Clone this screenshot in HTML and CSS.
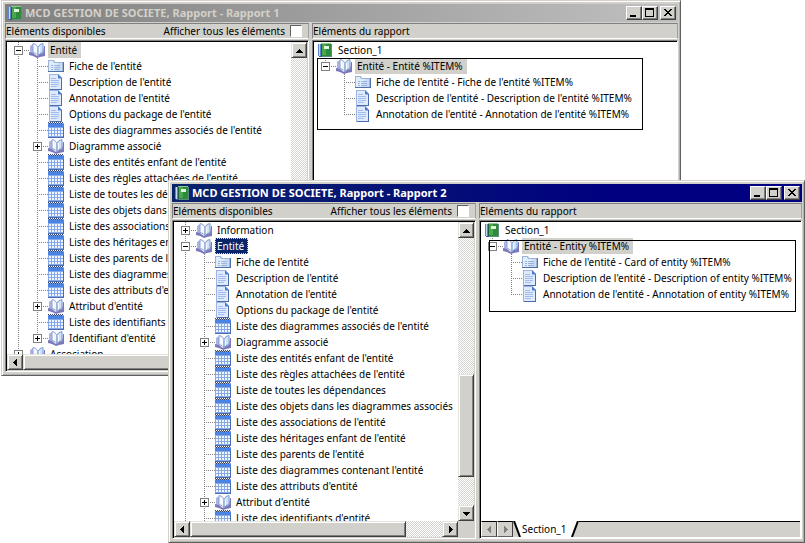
FILE: index.html
```html
<!DOCTYPE html>
<html lang="fr">
<head>
<meta charset="UTF-8">
<meta name="viewport" content="width=device-width, initial-scale=1.0">
<title>MCD GESTION DE SOCIETE</title>
<link rel="stylesheet" href="styles.css">
</head>
<body>
    <!-- Shared icons -->
    <svg class="sprite" aria-hidden="true">
        <symbol id="report" viewBox="0 0 16 16">
            <path d="M1 2h3v12H1z" fill="#5f86cc"/>
            <path d="M2 2h1v12H2z" fill="#c4daf4"/>
            <path d="M4 1h10v13H4z" fill="#2c8a3a"/>
            <path d="M4 1h10v1H4z" fill="#8cc890"/>
            <path d="M4 2h1v12H4z" fill="#1d5c3c"/>
            <path d="M5 2h4v11H5z" fill="#4aa84c"/>
            <path d="M7 4h5v3H7z" fill="#e4f4dc"/>
            <path d="M14 2h1v13h-1zM4 14h11v1H4z" fill="#5e8c80"/>
            <path d="M2 14h3v1H2z" fill="#3c5c98"/>
        </symbol>
        <symbol id="books" viewBox="0 0 16 16">
            <path d="M1 4l3-2v10l-3-1z" fill="#a9b4e4"/>
            <path d="M0 10l4 1 4 3 2-2 4-1 1-7h1v10l-5 1-3 1-4-2-4-1z" fill="#7c78bc"/>
            <path d="M4 1.500l3 1 2 3v8l-2-2-3-1z" fill="#f6f9ff" stroke="#8fa2cf" stroke-width="1"/>
            <path d="M9 5.500l2-3 3-1v9l-3 1-2 2z" fill="#cfe2f8" stroke="#7f9bcf" stroke-width="1"/>
            <path d="M10 6l1-2v7l-1 1z" fill="#f4f9ff"/>
        </symbol>
        <symbol id="folder" viewBox="0 0 16 16">
            <path d="M0 2h6l1 2h8v10H0z" fill="#9db4d8"/>
            <path d="M1 3h4l1 2h8v8H1z" fill="#e0edfb"/>
            <path d="M10 5h4v8H6z" fill="#c8dcf5"/>
            <path d="M0 13h16v1H0zM15 4h1v10h-1z" fill="#4f6fa8"/>
            <path d="M3 7h2v1H3zM6 7h6v1H6zM3 9h2v1H3zM6 9h6v1H6zM3 11h2v1H3zM6 11h6v1H6z" fill="#9db4de"/>
        </symbol>
        <symbol id="doc" viewBox="0 0 16 16">
            <path d="M1 0h9l4 4v12H1z" fill="#9db4e4"/>
            <path d="M2 1h8v4h3v10H2z" fill="#dfeafd"/>
            <path d="M10 0l4 4h-4z" fill="#4c7ed0"/>
            <path d="M13 4h1v12H2v-1h11z" fill="#4a6cae"/>
            <path d="M3 4h5v1H3zM3 6h8v1H3zM3 8h8v1H3zM3 10h8v1H3zM3 12h6v1H3z" fill="#a3bcf0"/>
        </symbol>
        <symbol id="list" viewBox="0 0 16 16">
            <path d="M0 1h16v15H0z" fill="#86a8e6"/>
            <path d="M0 2h16v3H0z" fill="#4a82e6"/>
            <path d="M0 0h1v1H0zM2 0h1v1H2zM4 0h1v1H4zM6 0h1v1H6zM8 0h1v1H8zM10 0h1v1h-1zM12 0h1v1h-1zM14 0h1v1h-1zM1 1h1v1H1zM3 1h1v1H3zM5 1h1v1H5zM7 1h1v1H7zM9 1h1v1H9zM11 1h1v1h-1zM13 1h1v1h-1z" fill="#3a4664"/>
            <path d="M1 6h2v2H1zM4 6h2v2H4zM7 6h2v2H7zM10 6h2v2h-2zM13 6h2v2h-2zM1 9h2v2H1zM4 9h2v2H4zM7 9h2v2H7zM10 9h2v2h-2zM13 9h2v2h-2zM1 12h2v2H1zM4 12h2v2H4zM7 12h2v2H7zM10 12h2v2h-2zM13 12h2v2h-2z" fill="#f2f7ff"/>
            <path d="M0 15h16v1H0zM15 5h1v11h-1z" fill="#4a6cae"/>
        </symbol>
        <symbol id="up" viewBox="0 0 7 7"><path d="M3 2h1v1h1v1h1v1h1v1H0V5h1V4h1V3h1z"/></symbol>
        <symbol id="down" viewBox="0 0 7 7"><path d="M0 2h7v1H6v1H5v1H4v1H3V5H2V4H1V3H0z"/></symbol>
        <symbol id="left" viewBox="0 0 7 7"><path d="M5 0v7H4V6H3V5H2V4H1V3h1V2h1V1h1V0z"/></symbol>
        <symbol id="right" viewBox="0 0 7 7"><path d="M2 0v7h1V6h1V5h1V4h1V3H5V2H4V1H3V0z"/></symbol>
        <symbol id="minimize" viewBox="0 0 10 10"><path d="M1 7h6v2H1z"/></symbol>
        <symbol id="maximize" viewBox="0 0 10 10"><path d="M0 0h9v9H0zM1 2v6h7V2z" fill-rule="evenodd"/></symbol>
        <symbol id="close" viewBox="0 0 10 10"><path d="M1 1h2v1h1v1h2V2h1V1h2v1H8v1H7v1H6v1h1v1h1v1h1v1H7V7H6V6H4v1H3v1H1V7h1V6h1V5h1V4H3V3H2V2H1z"/></symbol>
    </svg>

    <main class="desktop">
        <!-- Rapport 1 -->
        <section class="window window-back">
            <header class="titlebar">
                <svg class="icon"><use href="#report"/></svg>
                <h1>MCD GESTION DE SOCIETE, Rapport - Rapport 1</h1>
                <button class="caption" aria-label="Réduire"><svg><use href="#minimize"/></svg></button>
                <button class="caption" aria-label="Agrandir"><svg><use href="#maximize"/></svg></button>
                <button class="caption caption-close" aria-label="Fermer"><svg><use href="#close"/></svg></button>
            </header>
            <div class="panes">
                <div class="pane-head">
                    <h2>Eléments disponibles</h2>
                    <label for="all1">Afficher tous les éléments</label>
                    <input type="checkbox" id="all1">
                </div>
                <div class="pane-head">
                    <h2>Eléments du rapport</h2>
                </div>
                <div class="pane pane-scroll">
                    <ul class="tree">
                        <li>
                            <div class="row"><button class="toggle" aria-label="Replier"></button><svg class="icon"><use href="#books"/></svg><span class="label marked">Entité</span></div>
                            <ul>
                                <li><div class="row leaf"><svg class="icon"><use href="#folder"/></svg><span class="label">Fiche de l'entité</span></div></li>
                                <li><div class="row leaf"><svg class="icon"><use href="#doc"/></svg><span class="label">Description de l'entité</span></div></li>
                                <li><div class="row leaf"><svg class="icon"><use href="#doc"/></svg><span class="label">Annotation de l'entité</span></div></li>
                                <li><div class="row leaf"><svg class="icon"><use href="#doc"/></svg><span class="label">Options du package de l'entité</span></div></li>
                                <li><div class="row leaf"><svg class="icon"><use href="#list"/></svg><span class="label">Liste des diagrammes associés de l'entité</span></div></li>
                                <li><div class="row"><button class="toggle plus" aria-label="Développer"></button><svg class="icon"><use href="#books"/></svg><span class="label">Diagramme associé</span></div></li>
                                <li><div class="row leaf"><svg class="icon"><use href="#list"/></svg><span class="label">Liste des entités enfant de l'entité</span></div></li>
                                <li><div class="row leaf"><svg class="icon"><use href="#list"/></svg><span class="label">Liste des règles attachées de l'entité</span></div></li>
                                <li><div class="row leaf"><svg class="icon"><use href="#list"/></svg><span class="label">Liste de toutes les dépendances</span></div></li>
                                <li><div class="row leaf"><svg class="icon"><use href="#list"/></svg><span class="label">Liste des objets dans les diagrammes associés</span></div></li>
                                <li><div class="row leaf"><svg class="icon"><use href="#list"/></svg><span class="label">Liste des associations de l'entité</span></div></li>
                                <li><div class="row leaf"><svg class="icon"><use href="#list"/></svg><span class="label">Liste des héritages enfant de l'entité</span></div></li>
                                <li><div class="row leaf"><svg class="icon"><use href="#list"/></svg><span class="label">Liste des parents de l'entité</span></div></li>
                                <li><div class="row leaf"><svg class="icon"><use href="#list"/></svg><span class="label">Liste des diagrammes contenant l'entité</span></div></li>
                                <li><div class="row leaf"><svg class="icon"><use href="#list"/></svg><span class="label">Liste des attributs d'entité</span></div></li>
                                <li><div class="row"><button class="toggle plus" aria-label="Développer"></button><svg class="icon"><use href="#books"/></svg><span class="label">Attribut d'entité</span></div></li>
                                <li><div class="row leaf"><svg class="icon"><use href="#list"/></svg><span class="label">Liste des identifiants d'entité</span></div></li>
                                <li><div class="row"><button class="toggle plus" aria-label="Développer"></button><svg class="icon"><use href="#books"/></svg><span class="label">Identifiant d'entité</span></div></li>
                            </ul>
                        </li>
                        <li class="more"><div class="row"><button class="toggle plus" aria-label="Développer"></button><svg class="icon"><use href="#books"/></svg><span class="label">Association</span></div></li>
                    </ul>
                    <div class="scroll scroll-v">
                        <button aria-label="Haut"><svg><use href="#up"/></svg></button>
                        <span class="track"></span>
                        <button aria-label="Bas"><svg><use href="#down"/></svg></button>
                    </div>
                    <div class="scroll scroll-h">
                        <button aria-label="Gauche"><svg><use href="#left"/></svg></button>
                        <span class="thumb"></span>
                        <span class="track"></span>
                        <button aria-label="Droite"><svg><use href="#right"/></svg></button>
                    </div>
                </div>
                <div class="pane">
                    <div class="tree">
                        <div class="row section"><svg class="icon"><use href="#report"/></svg><span class="label">Section_1</span></div>
                        <ul>
                            <li>
                                <div class="row"><button class="toggle" aria-label="Replier"></button><svg class="icon"><use href="#books"/></svg><span class="label marked">Entité - Entité %ITEM%</span></div>
                                <ul>
                                    <li><div class="row leaf"><svg class="icon"><use href="#folder"/></svg><span class="label">Fiche de l'entité - Fiche de l'entité %ITEM%</span></div></li>
                                    <li><div class="row leaf"><svg class="icon"><use href="#doc"/></svg><span class="label">Description de l'entité - Description de l'entité %ITEM%</span></div></li>
                                    <li><div class="row leaf"><svg class="icon"><use href="#doc"/></svg><span class="label">Annotation de l'entité - Annotation de l'entité %ITEM%</span></div></li>
                                </ul>
                            </li>
                        </ul>
                        <div class="outline outline-back"></div>
                    </div>
                </div>
            </div>
        </section>

        <!-- Rapport 2 -->
        <section class="window window-front">
            <header class="titlebar active">
                <svg class="icon"><use href="#report"/></svg>
                <h1>MCD GESTION DE SOCIETE, Rapport - Rapport 2</h1>
                <button class="caption" aria-label="Réduire"><svg><use href="#minimize"/></svg></button>
                <button class="caption" aria-label="Agrandir"><svg><use href="#maximize"/></svg></button>
                <button class="caption caption-close" aria-label="Fermer"><svg><use href="#close"/></svg></button>
            </header>
            <div class="panes">
                <div class="pane-head">
                    <h2>Eléments disponibles</h2>
                    <label for="all2">Afficher tous les éléments</label>
                    <input type="checkbox" id="all2">
                </div>
                <div class="pane-head">
                    <h2>Eléments du rapport</h2>
                </div>
                <div class="pane pane-scroll">
                    <ul class="tree">
                        <li><div class="row"><button class="toggle plus" aria-label="Développer"></button><svg class="icon"><use href="#books"/></svg><span class="label">Information</span></div></li>
                        <li class="more">
                            <div class="row"><button class="toggle" aria-label="Replier"></button><svg class="icon"><use href="#books"/></svg><span class="label selected">Entité</span></div>
                            <ul>
                                <li><div class="row leaf"><svg class="icon"><use href="#folder"/></svg><span class="label">Fiche de l'entité</span></div></li>
                                <li><div class="row leaf"><svg class="icon"><use href="#doc"/></svg><span class="label">Description de l'entité</span></div></li>
                                <li><div class="row leaf"><svg class="icon"><use href="#doc"/></svg><span class="label">Annotation de l'entité</span></div></li>
                                <li><div class="row leaf"><svg class="icon"><use href="#doc"/></svg><span class="label">Options du package de l'entité</span></div></li>
                                <li><div class="row leaf"><svg class="icon"><use href="#list"/></svg><span class="label">Liste des diagrammes associés de l'entité</span></div></li>
                                <li><div class="row"><button class="toggle plus" aria-label="Développer"></button><svg class="icon"><use href="#books"/></svg><span class="label">Diagramme associé</span></div></li>
                                <li><div class="row leaf"><svg class="icon"><use href="#list"/></svg><span class="label">Liste des entités enfant de l'entité</span></div></li>
                                <li><div class="row leaf"><svg class="icon"><use href="#list"/></svg><span class="label">Liste des règles attachées de l'entité</span></div></li>
                                <li><div class="row leaf"><svg class="icon"><use href="#list"/></svg><span class="label">Liste de toutes les dépendances</span></div></li>
                                <li><div class="row leaf"><svg class="icon"><use href="#list"/></svg><span class="label">Liste des objets dans les diagrammes associés</span></div></li>
                                <li><div class="row leaf"><svg class="icon"><use href="#list"/></svg><span class="label">Liste des associations de l'entité</span></div></li>
                                <li><div class="row leaf"><svg class="icon"><use href="#list"/></svg><span class="label">Liste des héritages enfant de l'entité</span></div></li>
                                <li><div class="row leaf"><svg class="icon"><use href="#list"/></svg><span class="label">Liste des parents de l'entité</span></div></li>
                                <li><div class="row leaf"><svg class="icon"><use href="#list"/></svg><span class="label">Liste des diagrammes contenant l'entité</span></div></li>
                                <li><div class="row leaf"><svg class="icon"><use href="#list"/></svg><span class="label">Liste des attributs d'entité</span></div></li>
                                <li><div class="row"><button class="toggle plus" aria-label="Développer"></button><svg class="icon"><use href="#books"/></svg><span class="label">Attribut d'entité</span></div></li>
                                <li class="more"><div class="row leaf"><svg class="icon"><use href="#list"/></svg><span class="label">Liste des identifiants d'entité</span></div></li>
                            </ul>
                        </li>
                    </ul>
                    <div class="scroll scroll-v">
                        <button aria-label="Haut"><svg><use href="#up"/></svg></button>
                        <span class="track track-above"></span>
                        <span class="thumb"></span>
                        <span class="track track-below"></span>
                        <button aria-label="Bas"><svg><use href="#down"/></svg></button>
                    </div>
                    <div class="scroll scroll-h">
                        <button aria-label="Gauche"><svg><use href="#left"/></svg></button>
                        <span class="thumb"></span>
                        <span class="track"></span>
                        <button aria-label="Droite"><svg><use href="#right"/></svg></button>
                    </div>
                </div>
                <div class="pane pane-tabs">
                    <div class="tree">
                        <div class="row section"><svg class="icon"><use href="#report"/></svg><span class="label">Section_1</span></div>
                        <ul>
                            <li>
                                <div class="row"><button class="toggle" aria-label="Replier"></button><svg class="icon"><use href="#books"/></svg><span class="label marked">Entité - Entity %ITEM%</span></div>
                                <ul>
                                    <li><div class="row leaf"><svg class="icon"><use href="#folder"/></svg><span class="label">Fiche de l'entité - Card of entity %ITEM%</span></div></li>
                                    <li><div class="row leaf"><svg class="icon"><use href="#doc"/></svg><span class="label">Description de l'entité - Description of entity %ITEM%</span></div></li>
                                    <li><div class="row leaf"><svg class="icon"><use href="#doc"/></svg><span class="label">Annotation de l'entité - Annotation of entity %ITEM%</span></div></li>
                                </ul>
                            </li>
                        </ul>
                        <div class="outline outline-front"></div>
                    </div>
                    <div class="sheetbar">
                        <button class="sheet-nav" aria-label="Section précédente" disabled><svg><use href="#left"/></svg></button>
                        <button class="sheet-nav" aria-label="Section suivante" disabled><svg><use href="#right"/></svg></button>
                        <svg class="slant" viewBox="0 0 8 16"><path d="M1 0h7v16z" fill="#fff"/><path d="M1 0l6 16" stroke="#000" stroke-width="2" fill="none"/></svg>
                        <button class="sheet">Section_1</button>
                        <svg class="slant" viewBox="0 0 8 16"><path d="M0 0h7L1 16H0z" fill="#fff"/><path d="M7 0L1 16" stroke="#000" stroke-width="2" fill="none"/></svg>
                        <span class="sheet-rest"></span>
                    </div>
                </div>
            </div>
        </section>
    </main>
</body>
</html>
```
FILE: styles.css
```css
* {
    box-sizing: border-box;
}
body {
    margin: 0;
    background: #fff;
    color: #000;
    font-family: "Noto Sans", "Open Sans", sans-serif;
    font-size: 10px;
    line-height: 16px;
}
h1, h2 {
    margin: 0;
    font-size: 10px;
    font-weight: normal;
}
ul {
    list-style: none;
    margin: 0;
    padding: 0;
}
button {
    padding: 0;
    font: inherit;
    color: inherit;
}
.sprite {
    display: none;
}
.desktop {
    position: relative;
    height: 100vh;
    min-height: 500px;
    overflow: hidden;
}

/* Windows */
.window {
    position: absolute;
    display: flex;
    flex-direction: column;
    padding: 3px 2px 3px 3px;
    background: #d1d0ca;
    border: 1px solid;
    border-color: #d4d0c8 #606060 #606060 #d4d0c8;
    box-shadow: inset 1px 1px #fff, inset -1px -1px #b0b0ac;
}
.window-back {
    inset: 0 124px 167px 1px;
}
.window-front {
    inset: 180px 0 0 168px;
}
.titlebar {
    display: flex;
    align-items: center;
    height: 18px;
    padding: 0 2px 0 2px;
    background: linear-gradient(to right, #808080, #c0c0c0);
    color: #d4d0c8;
}
.titlebar.active {
    background: linear-gradient(to right, #0a246a, #000080 70%);
    color: #fff;
}
.titlebar h1 {
    flex: 1;
    margin-left: 2px;
    font-size: 11px;
    font-weight: bold;
    white-space: nowrap;
    overflow: hidden;
}
.icon {
    flex: none;
    width: 16px;
    height: 16px;
}
.caption {
    display: flex;
    align-items: center;
    justify-content: center;
    width: 16px;
    height: 14px;
    background: #d1d0ca;
    border: 1px solid;
    border-color: #fff #404040 #404040 #fff;
    box-shadow: inset -1px -1px #808080;
}
.caption-close {
    margin-left: 2px;
}
.caption svg {
    width: 10px;
    height: 10px;
}

/* Panes */
.panes {
    flex: 1;
    min-height: 0;
    display: grid;
    grid-template-columns: 304px minmax(0, 1fr);
    grid-template-rows: 16px minmax(0, 1fr);
    gap: 1px 3px;
    padding-top: 1px;
}
.pane-head {
    display: flex;
    align-items: center;
    border: 1px solid;
    border-color: #808080 #a0a09c #fff #808080;
}
.pane-head h2 {
    flex: 1;
}
.pane-head input {
    appearance: none;
    width: 12px;
    height: 12px;
    margin: 0 6px 0 5px;
    background: #fff;
    border: 1px solid;
    border-color: #606060 #fff #fff #606060;
}
.pane {
    display: grid;
    grid-template-rows: minmax(0, 1fr);
    background: #fff;
    border: 1px solid;
    border-color: #808080 #fff #fff #808080;
    box-shadow: inset 1px 1px #000;
    padding: 1px;
    min-width: 0;
}
.pane-scroll {
    background: #d1d0ca;
    grid-template-columns: minmax(0, 1fr) 16px;
    grid-template-rows: minmax(0, 1fr) 16px;
}
.pane-tabs {
    grid-template-rows: minmax(0, 1fr) 16px;
}

/* Tree */
.tree {
    position: relative;
    overflow: hidden;
    background: #fff;
}
.tree li {
    background: repeating-linear-gradient(#808080 0 1px, transparent 1px 2px) 11px 0 / 1px 100% no-repeat;
}
.tree li:last-child {
    background-size: 1px 8px;
}
.tree li.more {
    background-size: 1px 100%;
}
.tree li > ul {
    padding-left: 19px;
}
.row {
    display: flex;
    align-items: center;
    height: 16px;
    padding-left: 7px;
    white-space: nowrap;
    background: repeating-linear-gradient(to right, #808080 0 1px, transparent 1px 2px) 11px 8px / 12px 1px no-repeat;
}
.row.leaf {
    padding-left: 22px;
}
.row.section {
    padding-left: 3px;
    background: none;
}
.toggle {
    flex: none;
    width: 9px;
    height: 9px;
    margin-right: 6px;
    border: 1px solid #808080;
    background: linear-gradient(#000, #000) center / 5px 1px no-repeat #fff;
}
.toggle.plus {
    background: linear-gradient(#000, #000) center / 5px 1px no-repeat, linear-gradient(#000, #000) center / 1px 5px no-repeat #fff;
}
.label {
    margin-left: 3px;
    padding: 0 4px 0 2px;
}
.marked {
    background: #d1d0ca;
}
.selected {
    background: #0a246a;
    color: #fff;
    outline: 1px dotted #e8d48a;
    outline-offset: -1px;
}
.outline {
    position: absolute;
    height: 72px;
    border: 1px solid #000;
}
.outline-back {
    top: 16px;
    left: 3px;
    width: 326px;
}
.outline-front {
    top: 18px;
    left: 8px;
    width: 307px;
}

/* Scrollbars */
.scroll {
    display: flex;
}
.scroll-v {
    flex-direction: column;
}
.scroll button {
    flex: none;
    display: flex;
    align-items: center;
    justify-content: center;
    width: 16px;
    height: 16px;
}
.scroll button, .thumb {
    background: #d1d0ca;
    border: 1px solid;
    border-color: #e4e2dc #404040 #404040 #e4e2dc;
    box-shadow: inset 1px 1px #fff, inset -1px -1px #808080;
}
.scroll svg, .sheet-nav svg {
    width: 7px;
    height: 7px;
}
.track {
    flex: 1;
    background: repeating-conic-gradient(#fff 0 25%, #d4d4d0 0 50%) 0 0 / 2px 2px;
}
.track-above {
    flex-grow: 137;
}
.scroll-v .thumb {
    flex: 102;
}
.track-below {
    flex-grow: 28;
}
.scroll-h .thumb {
    flex: 6;
}

/* Section tabs */
.sheetbar {
    display: flex;
    background: #d1d0ca;
}
.sheet-nav {
    display: flex;
    align-items: center;
    justify-content: center;
    width: 16px;
    background: #d1d0ca;
    border: 1px solid;
    border-color: #000 #404040 #606060 #fff;
    fill: #808080;
}
.slant {
    width: 8px;
    height: 16px;
}
.sheet {
    padding: 0 4px 0 1px;
    border: 0;
    background: #fff;
}
.sheet-rest {
    flex: 1;
    border-top: 1px solid #000;
}
```
